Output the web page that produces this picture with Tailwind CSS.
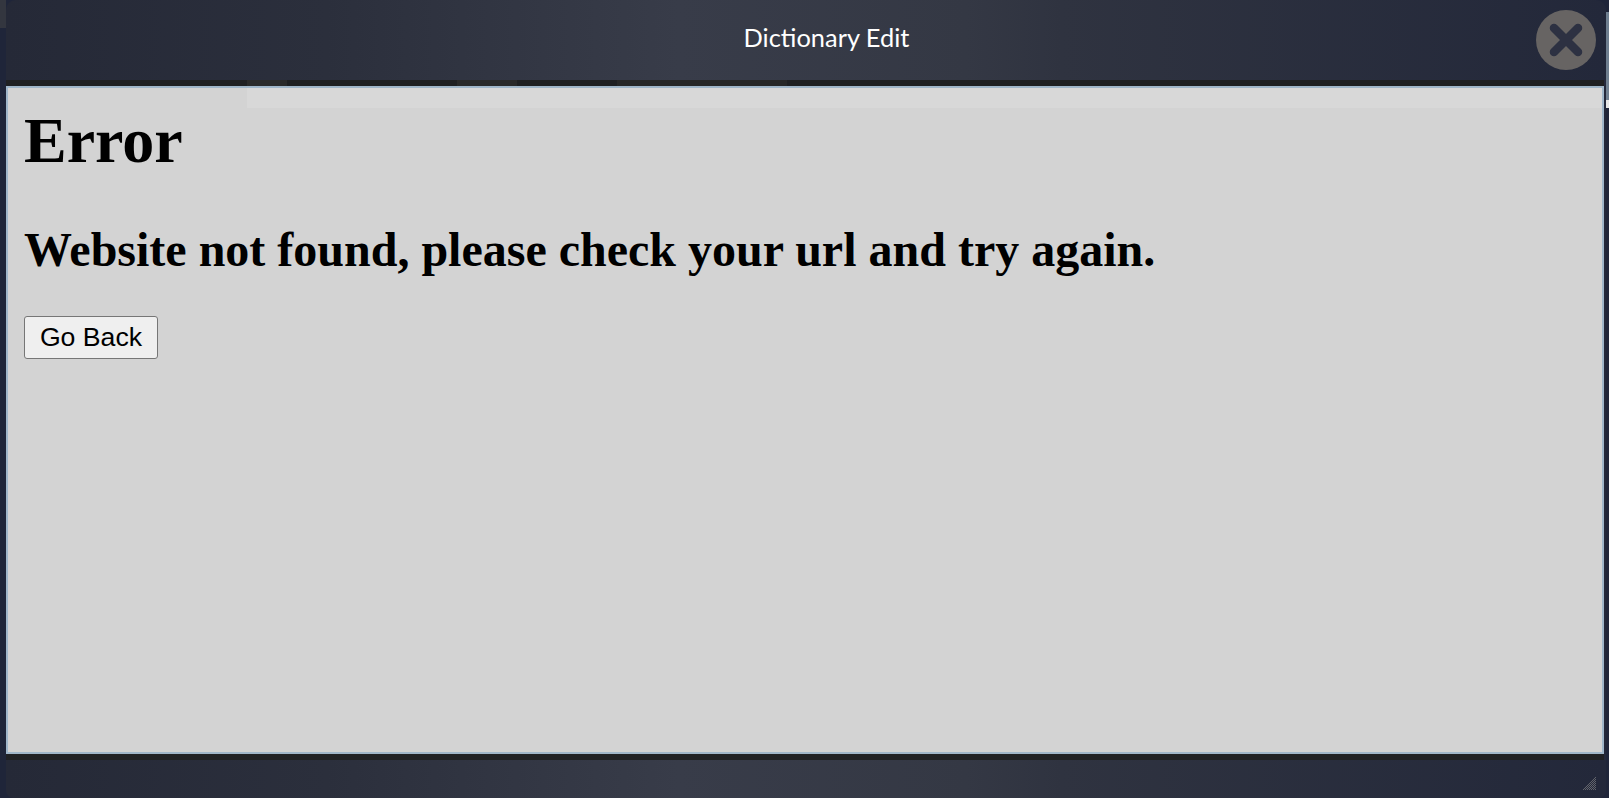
<!DOCTYPE html>
<html lang="en">

<head>
    <meta charset="UTF-8">
    <meta name="viewport" content="width=device-width, initial-scale=1.0">
    <script src="https://cdn.jsdelivr.net/npm/@tailwindcss/browser@4"></script>
    <title>Dictionary Edit</title>
</head>

<body class="h-[798px] w-[1609px] overflow-hidden bg-[#1f2539] flex">
    <!-- page behind the dialog -->
    <div class="w-[6px] shrink-0">
        <div class="h-[28px] bg-[#33363f]"></div>
    </div>

    <div class="w-[1600px] h-[798px] shrink-0 flex flex-col rounded-t-[10px] rounded-b-[8px] overflow-hidden bg-[linear-gradient(90deg,#252937_0%,#2b2f3c_20%,#383c49_42%,#343844_60%,#2f3340_66%,#23283a_100%)]">
        <div class="h-[80px] shrink-0 flex items-center justify-center relative">
            <h2 class="font-['Lato',sans-serif] text-[25.4px] text-white -mt-[5px] ml-[41px]">Dictionary Edit</h2>
            <div class="absolute left-[1530px] top-[10px] w-[60px] h-[60px] rounded-full bg-[#676463] flex items-center justify-center">
                <svg width="60" height="60" viewBox="0 0 60 60">
                    <path d="M18 18 L42 42 M42 18 L18 42" stroke="#2d3142" stroke-width="8.5" stroke-linecap="round" fill="none"></path>
                </svg>
            </div>
        </div>

        <div class="h-[6px] shrink-0 bg-[#1f2022] flex w-[1598px]">
            <div class="ml-[241px] w-[40px] bg-[#2a2a2a]"></div>
            <div class="ml-[170px] w-[60px] bg-[#292929]"></div>
            <div class="ml-[100px] w-[170px] bg-[#272727]"></div>
        </div>

        <main class="relative h-[668px] w-[1598px] shrink-0 border-2 border-[#a0b6c9] bg-[#d3d3d3] pl-[16px]">
            <div class="absolute left-[239px] right-0 top-0 h-[20px] bg-[#d8d8d8]"></div>
            <h1 class="relative pt-[16px] font-['Liberation_Serif',serif] text-[64px] leading-[74px] font-bold text-black">Error</h1>
            <h2 class="mt-[44px] font-['Liberation_Serif',serif] text-[48px] leading-[55px] font-bold text-black">Website not found, please check your url and try again.</h2>
            <button class="mt-[39px] h-[43px] w-[134px] pb-[2px] border border-[#767676] rounded-[3px] bg-[#efefef] font-['Liberation_Sans',sans-serif] text-[26.67px] text-black">Go Back</button>
        </main>

        <div class="h-[6px] shrink-0 w-[1598px] bg-[#202124]"></div>

        <div class="flex-1 relative">
            <svg class="absolute left-[1576px] top-[16px]" width="14" height="14" viewBox="0 0 14 14">
                <defs>
                    <pattern id="grip" width="2" height="2" patternUnits="userSpaceOnUse">
                        <rect width="1" height="1" fill="#62646b"></rect>
                        <rect x="1" y="1" width="1" height="1" fill="#62646b"></rect>
                    </pattern>
                </defs>
                <polygon points="14,0 14,14 0,14" fill="url(#grip)"></polygon>
            </svg>
        </div>
    </div>

    <div class="w-[3px] shrink-0">
        <div class="mt-[12px] h-[88px] bg-[#6f7f90]"></div>
        <div class="h-[8px] bg-[#e6e6e6]"></div>
    </div>
</body>

</html>
